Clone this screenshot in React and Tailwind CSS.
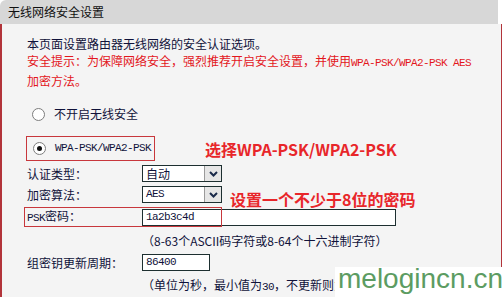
import React from 'react';

const cjk = "font-['Noto_Sans_CJK_SC',sans-serif]";
const mono = "font-['Liberation_Mono',monospace] text-[11px] tracking-[-0.6px]";

const Radio = ({ checked }) => (
    <div className="w-[13px] h-[13px] rounded-full border border-[#7d7d7d] bg-white flex items-center justify-center shrink-0">
        {checked && <div className="w-[5px] h-[5px] rounded-full bg-[#111]" />}
    </div>
);

const Select = ({ value, latin }) => (
    <div className="w-[80px] h-[17px] border border-[#1d2f30] bg-white flex">
        <div className={`flex-1 pl-[3px] leading-[15px] ${latin ? mono : 'text-[12px]'}`}>{value}</div>
        <div className="w-[17px] h-full bg-[#e6e6e6] border-l border-[#9a9a9a] flex items-center justify-center">
            <svg width="9" height="6" viewBox="0 0 9 6">
                <path d="M1 1 L4.5 4.5 L8 1" fill="none" stroke="#1a2a4a" strokeWidth="2" />
            </svg>
        </div>
    </div>
);

const Input = ({ value, width }) => (
    <div className={`${width} h-[17px] border border-[#1d2f30] bg-white pl-[3px] leading-[15px] ${mono}`}>
        {value}
    </div>
);

const App = () => {
    return (
        <div className={`relative w-[504px] h-[297px] overflow-hidden bg-white text-[12px] text-[#10123a] ${cjk}`}>
            {/* Title bar */}
            <div className="w-[498px] h-[24px] bg-[#d7d7d7] rounded-tl-[6px] pl-[8px] leading-[24px] text-[12px] text-[#111]">
                无线网络安全设置
            </div>

            {/* Body */}
            <div className="w-[502px] h-[273px] bg-[#f4f4f4] border-l-2 border-r border-[#b2343a] pl-[25px] pt-[11px]">
                <p className="leading-[17px]">
                    本页面设置路由器无线网络的安全认证选项。
                    <br />
                    <span className="text-[#e3161c]">
                        安全提示：为保障网络安全，强烈推荐开启安全设置，并使用
                        <span className={mono}>WPA-PSK/WPA2-PSK AES</span>
                        <br />
                        加密方法。
                    </span>
                </p>

                <div className="mt-[15px] h-[20px] flex items-center gap-[9px] pl-[5px]">
                    <Radio />
                    <span>不开启无线安全</span>
                </div>

                <div className="mt-[12px] flex items-center">
                    <div className="-ml-px w-[129px] h-[25px] border border-[#c8373c] flex items-center gap-[9px] pl-[6px]">
                        <Radio checked />
                        <span className={mono}>WPA-PSK/WPA2-PSK</span>
                    </div>
                    <span className="ml-[50px] text-[16px] font-bold text-[#e8262a]">选择WPA-PSK/WPA2-PSK</span>
                </div>

                <div className="mt-[4px] h-[17px] flex items-center">
                    <span className="w-[115px]">认证类型：</span>
                    <Select value="自动" />
                </div>

                <div className="mt-[4px] h-[17px] flex items-center">
                    <span className="w-[115px]">加密算法：</span>
                    <Select value="AES" latin />
                    <span className="ml-[8px] mt-[9px] text-[16px] font-bold text-[#e8262a]">设置一个不少于8位的密码</span>
                </div>

                <div className="relative mt-[4px] h-[20px] flex items-center">
                    <span className="absolute -left-[3px] top-0 w-[198px] h-[20px] border border-[#c8373c]" />
                    <span className="w-[115px]">
                        <span className={mono}>PSK</span>密码：
                    </span>
                    <Input value="1a2b3c4d" width="w-[254px]" />
                </div>

                <div className="mt-[6px] h-[16px] leading-[16px] pl-[115px]">
                    （8-63个ASCII码字符或8-64个十六进制字符）
                </div>

                <div className="mt-[5px] h-[17px] flex items-center">
                    <span className="w-[115px]">组密钥更新周期：</span>
                    <Input value="86400" width="w-[68px]" />
                </div>

                <div className="mt-[6px] h-[16px] leading-[16px] pl-[115px]">
                    （单位为秒，最小值为<span className={mono}>30</span>，不更新则为<span className={mono}>0</span>）
                </div>
            </div>

            {/* Watermark */}
            <div className="absolute left-[335px] top-[267px] w-[169px] h-[30px] bg-white pl-[3px] leading-[24px] text-[28px] text-[#5c9c62] font-['Liberation_Sans',sans-serif]">
                melogincn.cn
            </div>
        </div>
    );
};

export default App;
